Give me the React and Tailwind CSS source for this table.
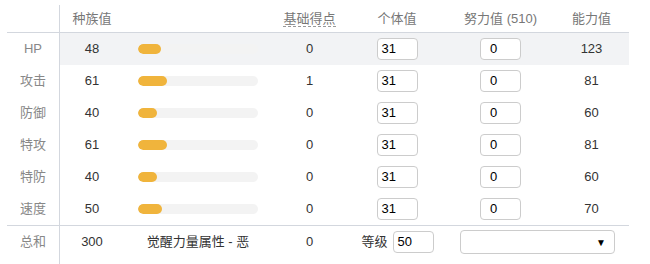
import React from "react";

const rows = [
  { label: "HP", base: 48, pt: 0, iv: 31, ev: 0, stat: 123, hl: true },
  { label: "攻击", base: 61, pt: 1, iv: 31, ev: 0, stat: 81 },
  { label: "防御", base: 40, pt: 0, iv: 31, ev: 0, stat: 60 },
  { label: "特攻", base: 61, pt: 0, iv: 31, ev: 0, stat: 81 },
  { label: "特防", base: 40, pt: 0, iv: 31, ev: 0, stat: 60 },
  { label: "速度", base: 50, pt: 0, iv: 31, ev: 0, stat: 70 },
];

const grid = "grid grid-cols-[53px_64px_148px_75px_100px_107px_75px]";

export default function App() {
  return (
    <div
      className="w-[650px] h-[264px] bg-white pt-[5px] pl-[7px] text-[13px] text-[#333] overflow-hidden"
      style={{ fontFamily: '"Liberation Sans", "Noto Sans CJK SC", sans-serif' }}
    >
      <div className="w-[622px]">
        <div className={`${grid} h-[28px] border-b border-[#d3d7de] text-[#777]`}>
          <div className="border-r border-[#d3d7de]" />
          <div className="flex items-center justify-center">种族值</div>
          <div />
          <div className="flex items-center justify-center">
            <span className="border-b border-dashed border-[#999] leading-[15px]">基础得点</span>
          </div>
          <div className="flex items-center justify-center">个体值</div>
          <div className="flex items-center justify-center">努力值 (510)</div>
          <div className="flex items-center justify-center">能力值</div>
        </div>
        {rows.map((r) => {
          const bg = r.hl ? "bg-[#f2f3f5]" : "";
          return (
            <div key={r.label} className={`${grid} h-[32px]`}>
              <div className="border-r border-[#d3d7de] flex items-center justify-center text-[#888]">
                {r.label}
              </div>
              <div className={`${bg} flex items-center justify-center`}>{r.base}</div>
              <div className={`${bg} flex items-center pl-[14px]`}>
                <div className="w-[120px] h-[10px] rounded-full bg-[#f3f3f3] overflow-hidden">
                  <div
                    className="h-full rounded-full bg-[#f0b43c]"
                    style={{ width: `${Math.round((r.base * 120) / 255)}px` }}
                  />
                </div>
              </div>
              <div className={`${bg} flex items-center justify-center`}>{r.pt}</div>
              <div className={`${bg} flex items-center justify-center`}>
                <div className="w-[41px] h-[22px] border border-[#ccc] rounded-[4px] bg-white flex items-center pl-[4px] text-black">
                  {r.iv}
                </div>
              </div>
              <div className={`${bg} flex items-center justify-center`}>
                <div className="w-[41px] h-[22px] border border-[#ccc] rounded-[4px] bg-white flex items-center pl-[9px] text-black">
                  {r.ev}
                </div>
              </div>
              <div className={`${bg} flex items-center justify-center`}>{r.stat}</div>
            </div>
          );
        })}
        <div className={`${grid} h-[39px] border-t border-[#d3d7de]`}>
          <div className="border-r border-[#d3d7de] h-full">
            <div className="h-[32px] flex items-center justify-center text-[#888]">总和</div>
          </div>
          <div className="h-[32px] flex items-center justify-center">300</div>
          <div className="h-[32px] flex items-center justify-center">觉醒力量属性 - 恶</div>
          <div className="h-[32px] flex items-center justify-center">0</div>
          <div className="h-[32px] flex items-center justify-center gap-[5px] pl-[1px]">
            <span>等级</span>
            <div className="w-[41px] h-[22px] border border-[#ccc] rounded-[4px] bg-white flex items-center pl-[4px] text-black">
              50
            </div>
          </div>
          <div className="col-span-2 h-[32px] flex items-center pl-[13px]">
            <div className="w-[155px] h-[24px] border border-[#ccc] rounded-[4px] bg-white flex items-center justify-end pr-[8px] text-black text-[10px]">
              ▼
            </div>
          </div>
        </div>
      </div>
    </div>
  );
}
